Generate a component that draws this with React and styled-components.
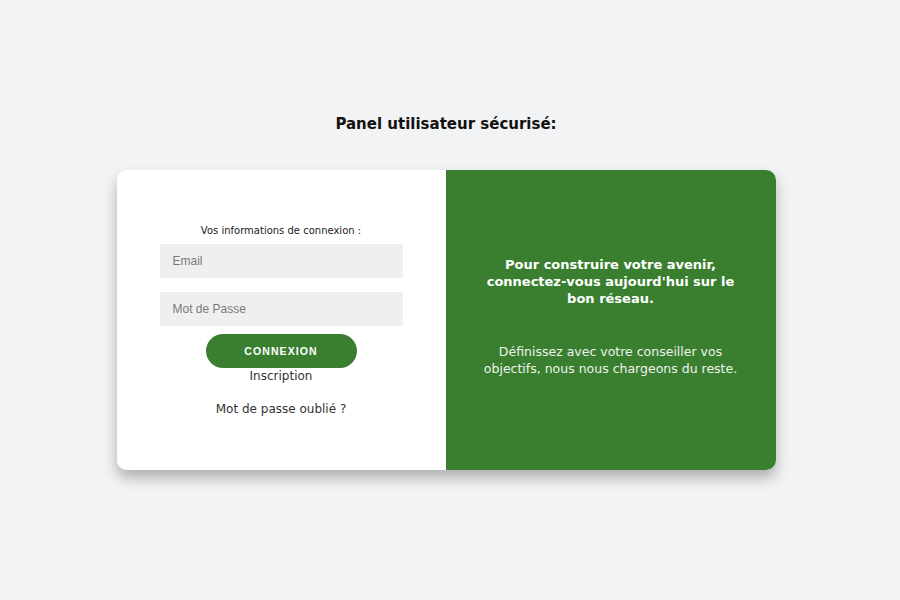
import React from 'react'
import styled, { createGlobalStyle } from 'styled-components'

const GlobalStyle = createGlobalStyle`
  * { box-sizing: border-box; }
  body {
    margin: 0;
    background: #f2f3f5;
    font-family: 'DejaVu Sans', 'Open Sans', sans-serif;
  }
`

const Page = styled.main`
  height: 600px;
  display: flex;
  flex-direction: column;
  align-items: center;
  padding: 112px 8px 0 0;
`

const Title = styled.h1`
  margin: 0 0 34px;
  font-size: 15px;
  font-weight: 800;
  color: #111;
  line-height: 24px;
`

const Card = styled.section`
  width: 659px;
  height: 300px;
  display: grid;
  grid-template-columns: 329px 1fr;
  border-radius: 10px;
  overflow: hidden;
  box-shadow: 0 8px 14px rgba(0, 0, 0, 0.28);
`

const LoginSide = styled.div`
  background: #fff;
  display: flex;
  flex-direction: column;
  align-items: center;
  padding-top: 53px;
`

const Label = styled.p`
  margin: 0 0 5px;
  font-size: 10px;
  color: #222;
  line-height: 16px;
`

const Field = styled.input`
  width: 243px;
  height: 34px;
  margin-bottom: ${p => p.$last ? '8px' : '14px'};
  border: none;
  background: #efefef;
  padding: 0 13px;
  font-family: 'Liberation Sans', Arial, sans-serif;
  font-size: 12px;
  outline: none;
  &::placeholder { color: #7a7a7a; }
`

const Button = styled.button`
  width: 151px;
  height: 34px;
  border: none;
  border-radius: 17px;
  background: #3a7f30;
  color: #fff;
  font-family: 'Liberation Sans', Arial, sans-serif;
  font-weight: 700;
  font-size: 10.5px;
  letter-spacing: 1.1px;
  cursor: pointer;
`

const TextLink = styled.a`
  display: block;
  color: #333;
  font-size: 12px;
  line-height: 16px;
  margin-top: ${p => p.$gap || '0'};
  text-decoration: none;
`

const InfoSide = styled.div`
  background: #3a7f30;
  color: #fff;
  display: flex;
  flex-direction: column;
  align-items: center;
  text-align: center;
  padding: 86px 20px 0;
`

const Headline = styled.h2`
  margin: 0 0 36px;
  font-size: 13px;
  font-weight: 800;
  line-height: 17px;
`

const Blurb = styled.p`
  margin: 0;
  font-size: 12.5px;
  line-height: 17px;
  color: #eef3ec;
`

export default function App() {
  return (
    <>
      <GlobalStyle />
      <Page>
        <Title>Panel utilisateur sécurisé:</Title>
        <Card>
          <LoginSide>
            <Label>Vos informations de connexion :</Label>
            <Field type="email" placeholder="Email" />
            <Field type="password" placeholder="Mot de Passe" $last />
            <Button>CONNEXION</Button>
            <TextLink href="#">Inscription</TextLink>
            <TextLink href="#" $gap="17px">Mot de passe oublié ?</TextLink>
          </LoginSide>
          <InfoSide>
            <Headline>
              Pour construire votre avenir,<br />
              connectez-vous aujourd'hui sur le<br />
              bon réseau.
            </Headline>
            <Blurb>
              Définissez avec votre conseiller vos<br />
              objectifs, nous nous chargeons du reste.
            </Blurb>
          </InfoSide>
        </Card>
      </Page>
    </>
  )
}
